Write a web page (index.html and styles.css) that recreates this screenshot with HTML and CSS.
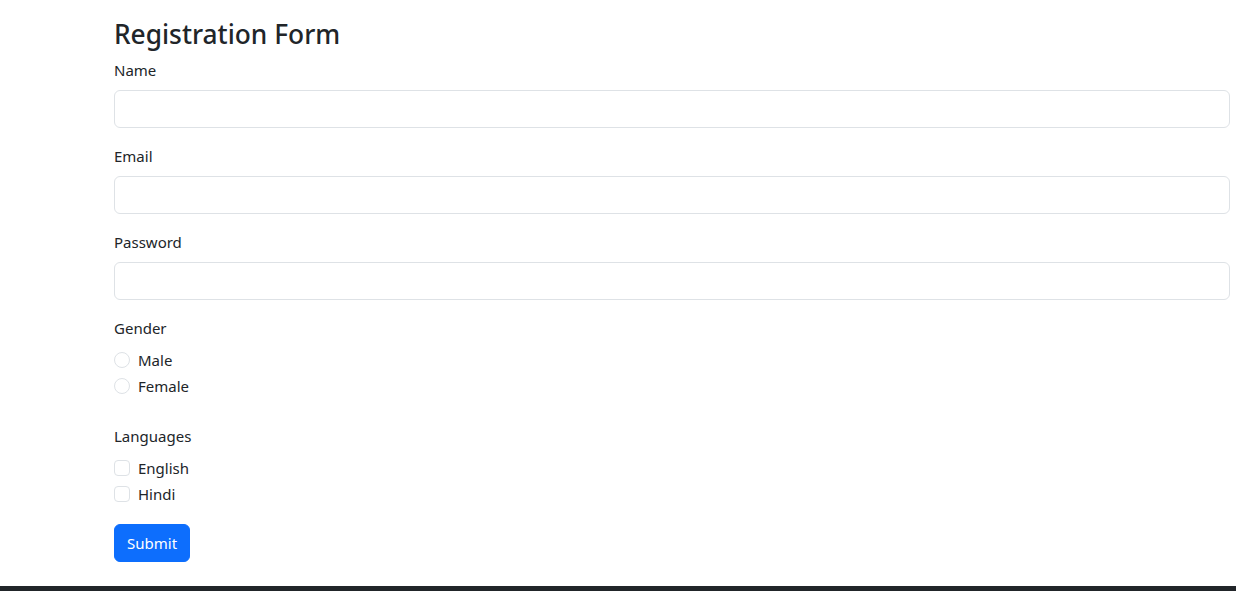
FILE: index.html
```html
<!DOCTYPE html>
<html lang="en">
<head>
<meta charset="utf-8">
<title>Registration Form</title>
<link rel="stylesheet" href="styles.css">
</head>
<body>
<main class="container">
  <h3 class="title">Registration Form</h3>
  <form class="form">
    <div class="field">
      <label class="label" for="name">Name</label>
      <input class="input" id="name" type="text">
    </div>
    <div class="field">
      <label class="label" for="email">Email</label>
      <input class="input" id="email" type="email">
    </div>
    <div class="field">
      <label class="label" for="password">Password</label>
      <input class="input" id="password" type="password">
    </div>
    <div class="field group">
      <label class="label">Gender</label>
      <div class="check"><input class="radio" type="radio" name="g" id="male"><label for="male">Male</label></div>
      <div class="check"><input class="radio" type="radio" name="g" id="female"><label for="female">Female</label></div>
    </div>
    <div class="field">
      <label class="label">Languages</label>
      <div class="check"><input class="box" type="checkbox" id="en"><label for="en">English</label></div>
      <div class="check"><input class="box" type="checkbox" id="hi"><label for="hi">Hindi</label></div>
    </div>
    <button class="btn" type="submit">Submit</button>
  </form>
</main>
<footer class="footer"></footer>
</body>
</html>
```

FILE: styles.css
```css
* { box-sizing: border-box; }
html, body { height: 100%; }
body {
  margin: 0;
  font-family: "Noto Sans", "Open Sans", sans-serif;
  font-size: 16px;
  line-height: 24px;
  color: #212529;
  background: #fff;
  display: flex;
  flex-direction: column;
}
.container {
  flex: 1;
  padding: 17px 6px 0 114px;
}
.title {
  margin: 0 0 7px;
  font-size: 26.3px;
  font-weight: 500;
  line-height: 34px;
}
.form { display: flex; flex-direction: column; align-items: flex-start; }
.field { margin-bottom: 16px; width: 100%; }
.group { margin-bottom: 24px; }
.label { display: block; margin-bottom: 8px; font-size: 15px; }
.input {
  display: block;
  width: 100%;
  height: 38px;
  border: 1px solid #dee2e6;
  border-radius: 6px;
  padding: 6px 12px;
  font: inherit;
  outline: none;
}
.check {
  display: flex;
  align-items: center;
  min-height: 24px;
  margin-bottom: 2px;
  font-size: 15px;
}
.check label { margin-left: 8px; }
.radio, .box {
  appearance: none;
  -webkit-appearance: none;
  width: 16px;
  height: 16px;
  margin: 0;
  border: 1px solid #dee2e6;
  background: #fff;
}
.radio { border-radius: 50%; }
.box { border-radius: 4px; }
.btn {
  height: 38px;
  padding: 6px 12px;
  border: 1px solid #0d6efd;
  border-radius: 6px;
  background: #0d6efd;
  color: #fff;
  font: inherit;
  font-size: 15px;
}
.footer {
  height: 5px;
  background: #212529;
}
```
